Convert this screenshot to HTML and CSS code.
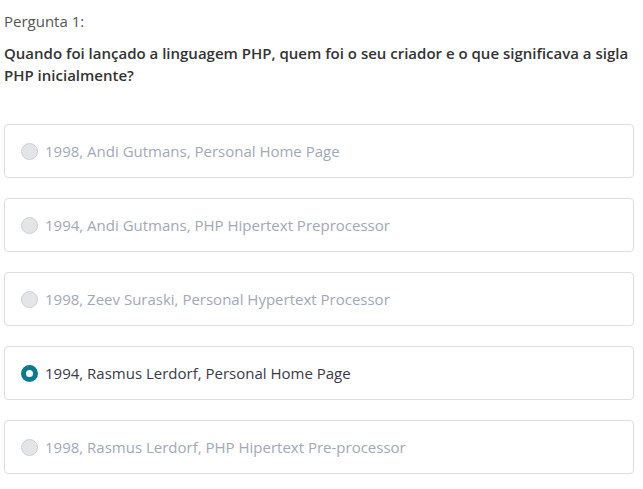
FILE: index.html
```html
<!DOCTYPE html>
<html lang="pt">
<head>
<meta charset="utf-8">
<title>Pergunta 1</title>
<link rel="stylesheet" href="styles.css">
</head>
<body>
<div class="quiz">
  <div class="label">Pergunta 1:</div>
  <div class="question">Quando foi lançado a linguagem PHP, quem foi o seu criador e o que significava a sigla PHP inicialmente?</div>
  <div class="options">
    <div class="option"><span class="radio"></span><span class="text">1998, Andi Gutmans, Personal Home Page</span></div>
    <div class="option"><span class="radio"></span><span class="text">1994, Andi Gutmans, PHP Hipertext Preprocessor</span></div>
    <div class="option"><span class="radio"></span><span class="text">1998, Zeev Suraski, Personal Hypertext Processor</span></div>
    <div class="option selected"><span class="radio"></span><span class="text">1994, Rasmus Lerdorf, Personal Home Page</span></div>
    <div class="option"><span class="radio"></span><span class="text">1998, Rasmus Lerdorf, PHP Hipertext Pre-processor</span></div>
  </div>
</div>
</body>
</html>
```
FILE: styles.css
```css
html, body { margin: 0; padding: 0; background: #fff; }
body { font-family: "Open Sans", "Liberation Sans", sans-serif; }
.quiz { width: 630px; margin-left: 4px; padding-top: 11px; }
.label { font-size: 15px; line-height: 20px; color: #555; }
.question { margin-top: 11px; font-size: 15px; font-weight: 600; line-height: 22px; color: #333; }
.options { margin-top: 38px; display: flex; flex-direction: column; gap: 20px; }
.option { box-sizing: border-box; height: 54px; border: 1px solid #ddd; border-radius: 4px; display: flex; align-items: center; padding-left: 16px; }
.radio { box-sizing: border-box; width: 17px; height: 17px; border-radius: 50%; background: #e4e5e8; border: 1px solid #cfd0d3; flex: none; }
.text { margin-left: 7px; font-size: 15px; color: #a2a8b6; }
.selected .radio { background: #fff; border: 5px solid #0a7a8f; }
.selected .text { color: #3a3a48; }
```
